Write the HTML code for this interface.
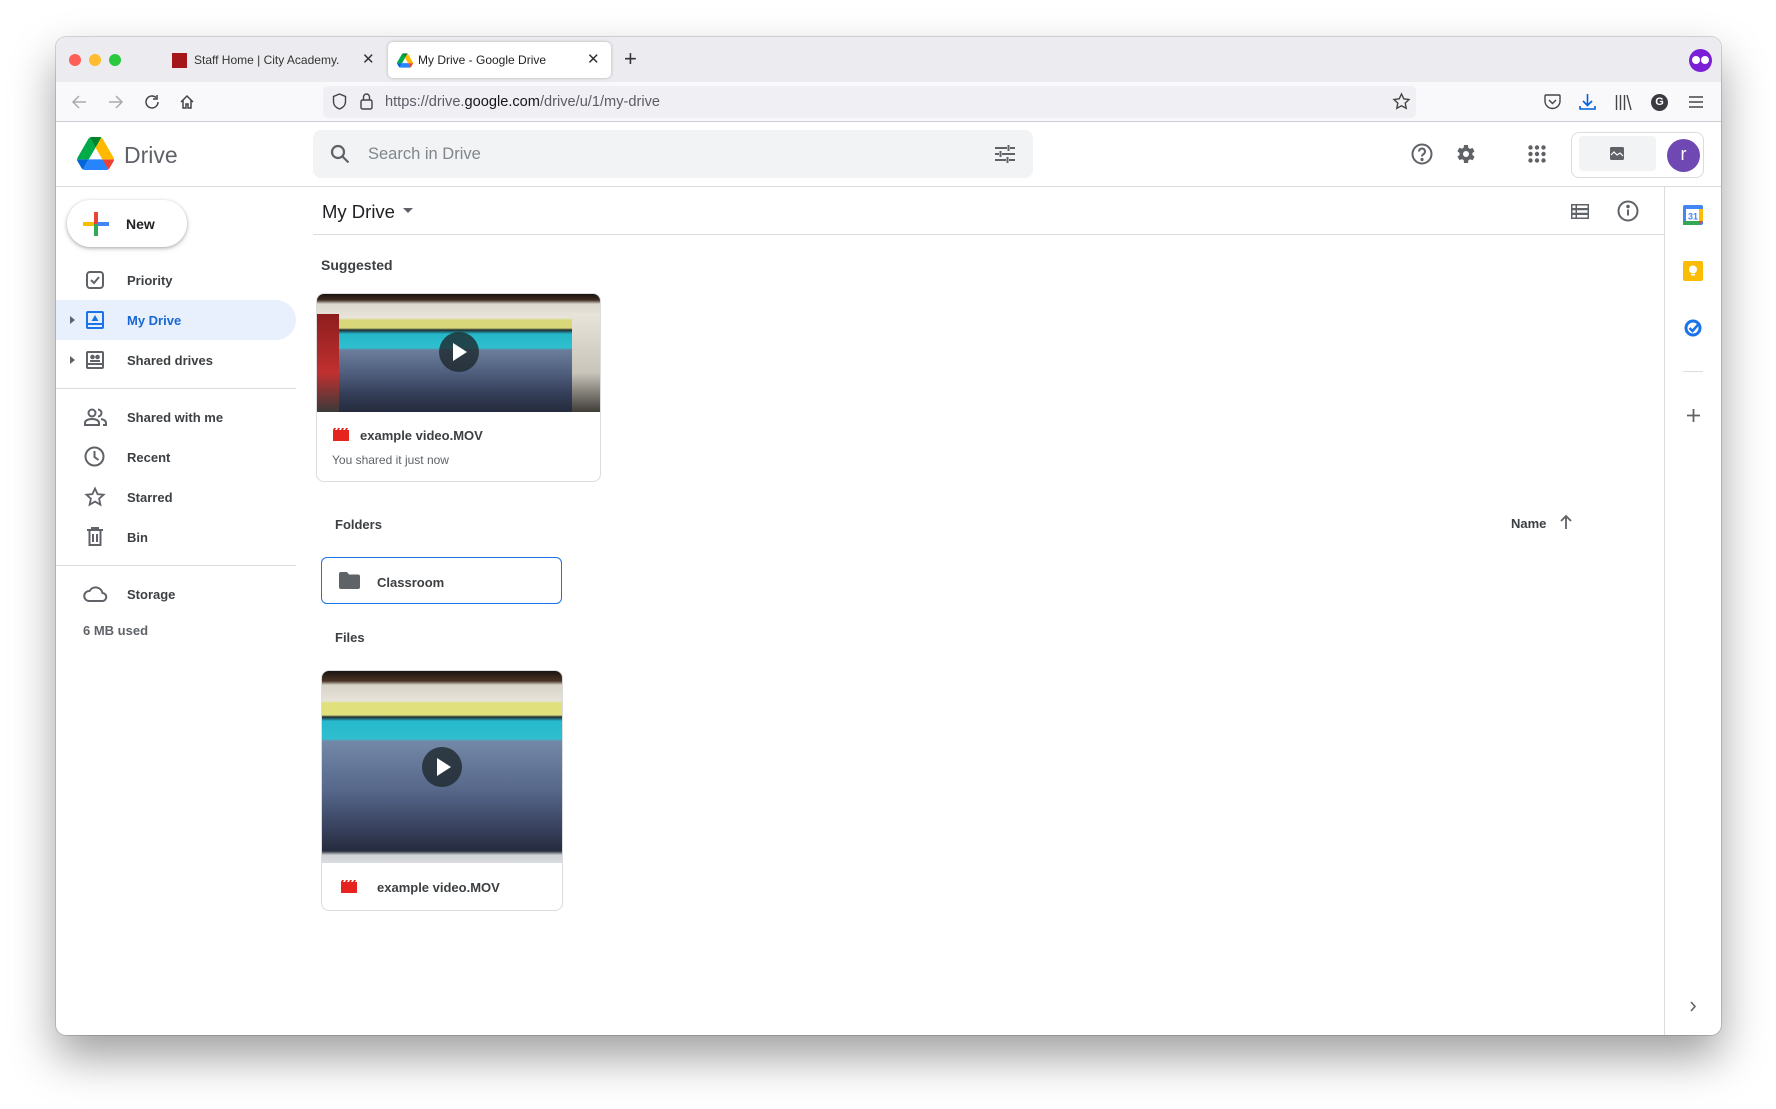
<!DOCTYPE html>
<html><head><meta charset="utf-8"><style>
*{box-sizing:border-box;margin:0;padding:0}
body{width:1776px;height:1109px;background:#fff;position:relative;overflow:hidden;font-family:"Liberation Sans",Arial,sans-serif;color:#3c4043}
.a{position:absolute}
.win{left:56px;top:37px;width:1665px;height:998px;border-radius:10px;background:#fff;box-shadow:0 22px 45px rgba(0,0,0,.38),0 0 0 1px rgba(0,0,0,.15);overflow:hidden}
.lbl{font-size:13px;font-weight:bold;color:#3c4043}
svg{position:absolute;overflow:visible}
</style></head><body>
<div class="a win"></div>
<div class="a" style="left:56px;top:37px;width:1665px;height:45px;background:#ececf0;border-radius:10px 10px 0 0"></div>
<div class="a" style="left:69px;top:54px;width:12px;height:12px;border-radius:50%;background:#fe5f57"></div>
<div class="a" style="left:89px;top:54px;width:12px;height:12px;border-radius:50%;background:#febc2e"></div>
<div class="a" style="left:109px;top:54px;width:12px;height:12px;border-radius:50%;background:#28c840"></div>
<div class="a" style="left:172px;top:53px;width:15px;height:15px;background:#a4161a"></div>
<div class="a" style="left:194px;top:53px;font-size:12px;color:#333">Staff Home | City Academy.</div>
<div class="a" style="left:362px;top:50px;font-size:15px;color:#333">✕</div>
<div class="a" style="left:388px;top:42px;width:223px;height:36px;background:#fff;border-radius:5px;box-shadow:0 0 3px rgba(0,0,0,.25)"></div>
<svg style="left:397px;top:53px" width="16" height="15" viewBox="0 0 87 78"><path d="M6.6 66.85l3.850 6.65c.8 1.4 1.95 2.5 3.3 3.3L27.5 53H0c0 1.55.4 3.1 1.2 4.5z" fill="#0066da"/><path d="M43.65 25L29.9 1.2c-1.35.8-2.5 1.9-3.3 3.3L1.2 48.5A9 9 0 000 53h27.5z" fill="#00ac47"/><path d="M73.55 76.8c1.35-.8 2.5-1.9 3.3-3.3l1.6-2.75 7.65-13.25c.8-1.4 1.2-2.95 1.2-4.5H59.8l5.85 11.5z" fill="#ea4335"/><path d="M43.65 25L57.4 1.2C56.05.4 54.5 0 52.9 0H34.4c-1.6 0-3.15.45-4.5 1.2z" fill="#00832d"/><path d="M59.8 53H27.5L13.75 76.8c1.35.8 2.9 1.2 4.5 1.2h50.8c1.6 0 3.15-.45 4.5-1.2z" fill="#2684fc"/><path d="M73.4 26.5L60.7 4.5c-.8-1.4-1.95-2.5-3.3-3.3L43.65 25 59.8 53h27.45c0-1.55-.4-3.1-1.2-4.5z" fill="#ffba00"/></svg>
<div class="a" style="left:418px;top:53px;font-size:12px;color:#222">My Drive - Google Drive</div>
<div class="a" style="left:587px;top:50px;font-size:15px;color:#333">✕</div>
<div class="a" style="left:624px;top:46px;font-size:22px;color:#333;font-weight:300">+</div>
<div class="a" style="left:1689px;top:49px;width:23px;height:23px;border-radius:50%;background:#7a1fd6"></div>
<div class="a" style="left:1692px;top:56px;width:8px;height:8px;border-radius:50%;background:#fff"></div>
<div class="a" style="left:1701px;top:56px;width:8px;height:8px;border-radius:50%;background:#fff"></div>
<div class="a" style="left:56px;top:82px;width:1665px;height:40px;background:#f9f9fb;border-bottom:1px solid #cfcfd8"></div>
<svg style="left:71px;top:94px" width="16" height="16" fill="none" stroke="#aaa" stroke-width="1.5"><path d="M15 8H2M8 2L2 8l6 6"/></svg>
<svg style="left:108px;top:94px" width="16" height="16" fill="none" stroke="#aaa" stroke-width="1.5"><path d="M1 8h13M8 2l6 6-6 6"/></svg>
<svg style="left:144px;top:94px" width="16" height="16" fill="none" stroke="#444" stroke-width="1.5"><path d="M14 8a6 6 0 1 1-2-4.5M13 1v4H9"/></svg>
<svg style="left:179px;top:94px" width="16" height="16" fill="none" stroke="#444" stroke-width="1.5"><path d="M2 8L8 2l6 6M4 6v8h3v-4h2v4h3V6"/></svg>
<div class="a" style="left:323px;top:86px;width:1093px;height:32px;background:#f0f0f4;border-radius:5px"></div>
<svg style="left:332px;top:93px" width="15" height="17" fill="none" stroke="#444" stroke-width="1.4"><path d="M7.5 1L1.5 3.5v5c0 4 3 6.5 6 7.5 3-1 6-3.5 6-7.5v-5z"/></svg>
<svg style="left:360px;top:92px" width="13" height="18" fill="none" stroke="#444" stroke-width="1.4"><rect x="1" y="8" width="11" height="9" rx="1.5"/><path d="M3.5 8V5a3 3 0 0 1 6 0v3"/></svg>
<div class="a" style="left:385px;top:94px;font-size:14.6px;color:#5b5b66">https://drive.<span style="color:#15141a">google.com</span>/drive/u/1/my-drive</div>
<svg style="left:1393px;top:93px" width="17" height="17" fill="none" stroke="#444" stroke-width="1.4"><path d="M8.5 1l2.3 4.8 5.2.7-3.8 3.6 1 5.2-4.7-2.5-4.7 2.5 1-5.2L1 6.5l5.2-.7z"/></svg>
<svg style="left:1544px;top:94px" width="17" height="16" fill="none" stroke="#444" stroke-width="1.4"><path d="M2 1h13a1 1 0 0 1 1 1v5a7.5 7.5 0 0 1-15 0V2a1 1 0 0 1 1-1zM5 6l3.5 3.5L12 6"/></svg>
<svg style="left:1579px;top:93px" width="17" height="17" fill="none" stroke="#0061e0" stroke-width="1.6"><path d="M8.5 1v11M4 8l4.5 4.5L13 8M1 13v3h15v-3"/></svg>
<svg style="left:1615px;top:94px" width="17" height="16" fill="none" stroke="#444" stroke-width="1.4"><path d="M1.5 1v15M5.5 1v15M9.5 1v15M12 1l4 15"/></svg>
<div class="a" style="left:1651px;top:94px;width:17px;height:17px;border-radius:50%;background:#3a3a40;color:#fff;font-size:11px;font-weight:bold;text-align:center;line-height:17px">G</div>
<svg style="left:1688px;top:95px" width="16" height="14" fill="none" stroke="#444" stroke-width="1.4"><path d="M1 2h14M1 7h14M1 12h14"/></svg>
<div class="a" style="left:56px;top:186px;width:1665px;height:1px;background:#dadce0"></div>
<svg style="left:77px;top:137px" width="37" height="33" viewBox="0 0 87 78"><path d="M6.6 66.85l3.85 6.65c.8 1.4 1.95 2.5 3.3 3.3L27.5 53H0c0 1.55.4 3.1 1.2 4.5z" fill="#0066da"/><path d="M43.65 25L29.9 1.2c-1.35.8-2.5 1.9-3.3 3.3L1.2 48.5A9 9 0 000 53h27.5z" fill="#00ac47"/><path d="M73.55 76.8c1.35-.8 2.5-1.9 3.3-3.3l1.6-2.75 7.65-13.25c.8-1.4 1.2-2.95 1.2-4.5H59.8l5.85 11.5z" fill="#ea4335"/><path d="M43.65 25L57.4 1.2C56.05.4 54.5 0 52.9 0H34.4c-1.6 0-3.15.45-4.5 1.2z" fill="#00832d"/><path d="M59.8 53H27.5L13.75 76.8c1.35.8 2.9 1.2 4.5 1.2h50.8c1.6 0 3.15-.45 4.5-1.2z" fill="#2684fc"/><path d="M73.4 26.5L60.7 4.5c-.8-1.4-1.95-2.5-3.3-3.3L43.65 25 59.8 53h27.45c0-1.55-.4-3.1-1.2-4.5z" fill="#ffba00"/></svg>
<div class="a" style="left:124px;top:142px;font-size:23px;color:#5f6368">Drive</div>
<div class="a" style="left:313px;top:130px;width:720px;height:48px;background:#f1f3f4;border-radius:8px"></div>
<svg style="left:330px;top:144px" width="20" height="20" fill="none" stroke="#5f6368" stroke-width="2.2"><circle cx="8" cy="8" r="6"/><path d="M12.5 12.5l6 6"/></svg>
<div class="a" style="left:368px;top:145px;font-size:16.5px;color:#80868b">Search in Drive</div>
<svg style="left:995px;top:145px" width="20" height="18" fill="none" stroke="#5f6368" stroke-width="2"><path d="M0 3h12M15 3h5M13.5 0v6M0 9h4M7 9h13M5.5 6v6M0 15h11M14 15h6M12.5 12v6"/></svg>
<svg style="left:1411px;top:143px" width="22" height="22" fill="none" stroke="#5f6368" stroke-width="2"><circle cx="11" cy="11" r="9.5"/><path d="M8 8.5a3 3 0 1 1 4.5 2.6c-1 .6-1.5 1.2-1.5 2.4"/><circle cx="11" cy="16.5" r=".6" fill="#5f6368"/></svg>
<svg style="left:1454px;top:142px" width="24" height="24" viewBox="0 0 24 24"><path fill="#5f6368" d="M19.4 13a7.5 7.5 0 0 0 0-2l2.1-1.6-2-3.5-2.5 1a7 7 0 0 0-1.7-1L15 3h-4l-.4 2.7a7 7 0 0 0-1.7 1l-2.5-1-2 3.5L6.6 11a7.5 7.5 0 0 0 0 2l-2.1 1.6 2 3.5 2.5-1a7 7 0 0 0 1.7 1L11 21h4l.4-2.7a7 7 0 0 0 1.7-1l2.5 1 2-3.5z" transform="translate(-1 0)"/><circle cx="12" cy="12" r="3" fill="#fff"/></svg>
<svg style="left:1528px;top:145px" width="18" height="18" fill="#5f6368"><circle cx="2.5" cy="2.5" r="2.2"/><circle cx="9" cy="2.5" r="2.2"/><circle cx="15.5" cy="2.5" r="2.2"/><circle cx="2.5" cy="9" r="2.2"/><circle cx="9" cy="9" r="2.2"/><circle cx="15.5" cy="9" r="2.2"/><circle cx="2.5" cy="15.5" r="2.2"/><circle cx="9" cy="15.5" r="2.2"/><circle cx="15.5" cy="15.5" r="2.2"/></svg>
<div class="a" style="left:1571px;top:132px;width:133px;height:46px;border:1px solid #dadce0;border-radius:8px"></div>
<div class="a" style="left:1579px;top:136px;width:77px;height:35px;background:#f1f3f4;border-radius:4px"></div>
<svg style="left:1610px;top:147px" width="14" height="13"><rect width="14" height="13" rx="1.5" fill="#5f6368"/><path d="M1 8l3-3 3 3 3-2 3 3" fill="none" stroke="#fff" stroke-width="1.2"/></svg>
<div class="a" style="left:1667px;top:139px;width:33px;height:33px;border-radius:50%;background:#6f48b3;color:#fff;font-size:18px;text-align:center;line-height:31px">r</div>
<div class="a" style="left:67px;top:200px;width:120px;height:47px;border-radius:24px;background:#fff;box-shadow:0 1px 3px rgba(60,64,67,.35),0 2px 6px rgba(60,64,67,.15)"></div>
<div class="a" style="left:94px;top:212px;width:4px;height:12px;background:#ea4335"></div>
<div class="a" style="left:94px;top:224px;width:4px;height:12px;background:#34a853"></div>
<div class="a" style="left:83px;top:222px;width:11px;height:4px;background:#fbbc04"></div>
<div class="a" style="left:98px;top:222px;width:11px;height:4px;background:#4285f4"></div>
<div class="a lbl" style="left:126px;top:216px;font-size:14px;color:#202124">New</div>
<div class="a" style="left:56px;top:300px;width:240px;height:40px;background:#e8f0fe;border-radius:0 20px 20px 0"></div>
<svg style="left:86px;top:271px" width="18" height="18" fill="none" stroke="#5f6368" stroke-width="2"><rect x="1" y="1" width="16" height="16" rx="3"/><path d="M5 9l3 3 5-6"/></svg>
<div class="a lbl" style="left:127px;top:273px">Priority</div>
<svg style="left:70px;top:316px" width="6" height="8"><path d="M0 0l5 4-5 4z" fill="#5f6368"/></svg>
<svg style="left:86px;top:311px" width="18" height="18" fill="none" stroke="#1a73e8" stroke-width="2"><rect x="1" y="1" width="16" height="16" rx="1"/><path d="M1 13h16"/><path d="M9 4l3.5 6h-7z" fill="#1a73e8" stroke="none"/></svg>
<div class="a lbl" style="left:127px;top:313px;color:#1967d2">My Drive</div>
<svg style="left:70px;top:356px" width="6" height="8"><path d="M0 0l5 4-5 4z" fill="#5f6368"/></svg>
<svg style="left:86px;top:351px" width="18" height="18" fill="none" stroke="#5f6368" stroke-width="2"><rect x="1" y="1" width="16" height="16" rx="1"/><path d="M1 13h16"/><circle cx="6.5" cy="6" r="1.3" fill="#5f6368"/><circle cx="11.5" cy="6" r="1.3" fill="#5f6368"/><path d="M4 10h5M9 10h5" stroke-width="2"/></svg>
<div class="a lbl" style="left:127px;top:353px">Shared drives</div>
<div class="a" style="left:56px;top:388px;width:240px;height:1px;background:#dadce0"></div>
<svg style="left:84px;top:408px" width="24" height="18" fill="none" stroke="#5f6368" stroke-width="2"><circle cx="8" cy="5" r="3.5"/><path d="M1 17v-2c0-2.5 3-4 7-4s7 1.5 7 4v2zM14 1.5a3.5 3.5 0 0 1 0 7M17 11c2.5.5 5 1.8 5 4v2h-3"/></svg>
<div class="a lbl" style="left:127px;top:410px">Shared with me</div>
<svg style="left:84px;top:446px" width="21" height="21" fill="none" stroke="#5f6368" stroke-width="2"><circle cx="10.5" cy="10.5" r="9"/><path d="M10.5 5v6l4 3"/></svg>
<div class="a lbl" style="left:127px;top:450px">Recent</div>
<svg style="left:85px;top:487px" width="20" height="20" fill="none" stroke="#5f6368" stroke-width="1.8"><path d="M10 1.5l2.6 5.6 6 .6-4.5 4 1.3 6-5.4-3.1-5.4 3.1 1.3-6L1.4 7.7l6-.6z"/></svg>
<div class="a lbl" style="left:127px;top:490px">Starred</div>
<svg style="left:87px;top:527px" width="16" height="19" fill="none" stroke="#5f6368" stroke-width="2"><path d="M0 3h16M5 3V1h6v2M2.5 3v15h11V3M6 7v8M10 7v8"/></svg>
<div class="a lbl" style="left:127px;top:530px">Bin</div>
<div class="a" style="left:56px;top:565px;width:240px;height:1px;background:#dadce0"></div>
<svg style="left:83px;top:585px" width="24" height="17" fill="none" stroke="#5f6368" stroke-width="2"><path d="M6 16h13a4 4 0 0 0 .5-8A7 7 0 0 0 6.5 6 5 5 0 0 0 6 16z"/></svg>
<div class="a lbl" style="left:127px;top:587px">Storage</div>
<div class="a" style="left:83px;top:623px;font-size:13px;color:#5f6368;font-weight:bold">6 MB used</div>
<div class="a" style="left:322px;top:201px;font-size:18.5px;color:#202124">My Drive</div>
<svg style="left:403px;top:208px" width="10" height="5"><path d="M0 0h10L5 5z" fill="#5f6368"/></svg>
<div class="a" style="left:313px;top:234px;width:1351px;height:1px;background:#dadce0"></div>
<svg style="left:1571px;top:204px" width="18" height="15" fill="#5f6368"><rect width="18" height="15"/><path d="M1.5 1.5h3v2.5h-3zM6 1.5h10.5v2.5H6zM1.5 6.3h3v2.5h-3zM6 6.3h10.5v2.5H6zM1.5 11h3v2.5h-3zM6 11h10.5v2.5H6z" fill="#fff"/></svg>
<svg style="left:1617px;top:200px" width="22" height="22" fill="none" stroke="#5f6368" stroke-width="2"><circle cx="11" cy="11" r="9.5"/><path d="M11 9.5v6"/><circle cx="11" cy="6.5" r=".8" fill="#5f6368"/></svg>
<div class="a" style="left:1664px;top:187px;width:1px;height:848px;background:#dadce0"></div>
<svg style="left:1683px;top:205px" width="20" height="20"><rect width="20" height="20" rx="2" fill="#4285f4"/><rect x="3" y="4" width="14" height="12" fill="#fff"/><rect x="0" y="16" width="16" height="4" fill="#34a853"/><rect x="16" y="4" width="4" height="12" fill="#fbbc04"/><path d="M16 16h4l-4 4z" fill="#ea4335"/><text x="10" y="14.5" font-size="9" font-family="Liberation Sans" font-weight="bold" fill="#4285f4" text-anchor="middle">31</text></svg>
<svg style="left:1683px;top:261px" width="20" height="20"><rect width="20" height="20" rx="2" fill="#fbbc04"/><circle cx="10" cy="8.5" r="4" fill="#fff"/><rect x="8" y="13" width="4" height="1.5" fill="#fff"/></svg>
<svg style="left:1684px;top:318px" width="19" height="19"><circle cx="9" cy="10" r="7" fill="none" stroke="#1a73e8" stroke-width="3"/><path d="M5.5 10l3 3 7-8" fill="none" stroke="#1a73e8" stroke-width="2.5"/></svg>
<div class="a" style="left:1683px;top:371px;width:20px;height:1px;background:#dadce0"></div>
<svg style="left:1687px;top:409px" width="13" height="13" stroke="#5f6368" stroke-width="1.8"><path d="M6.5 0v13M0 6.5h13"/></svg>
<svg style="left:1690px;top:1001px" width="6" height="11" fill="none" stroke="#5f6368" stroke-width="1.6"><path d="M1 1l4 4.5L1 10"/></svg>
<div class="a lbl" style="left:321px;top:257px;font-size:14px">Suggested</div>
<div class="a" style="left:316px;top:293px;width:285px;height:189px;border:1px solid #dadce0;border-radius:8px;overflow:hidden">
 <div class="a" style="left:0;top:0;width:285px;height:118px;background:linear-gradient(180deg,#1a1410 0,#3d2c22 6px,#ddd9cf 10px,#e8e4da 24px,#d8d87a 26px,#d8d87a 34px,#1e2a30 36px,#25b7c9 40px,#2fbfcf 54px,#6c7e9c 56px,#4e5d7c 80px,#343e58 100px,#262c3e 118px)"></div>
 <div class="a" style="left:0;top:20px;width:22px;height:98px;background:linear-gradient(#8d1d1d,#c03030 60%,#3a3a3a)"></div>
 <div class="a" style="left:255px;top:20px;width:30px;height:98px;background:linear-gradient(#e8e4da,#c8c4ba 60%,#403c38)"></div>
 <div class="a" style="left:122px;top:38px;width:40px;height:40px;border-radius:50%;background:rgba(30,40,45,.8)"></div>
 <svg style="left:136px;top:49px" width="14" height="18"><path d="M0 0l14 9-14 9z" fill="#fff"/></svg>
</div>
<svg style="left:333px;top:428px" width="16" height="13"><rect y="2" width="16" height="11" fill="#e52420"/><path d="M1 0h2l-1 2H0zM5 0h2l-1 2H4zM9 0h2l-1 2H8zM13 0h2l-1 2h-2z" fill="#e52420"/></svg>
<div class="a lbl" style="left:360px;top:428px">example video.MOV</div>
<div class="a" style="left:332px;top:453px;font-size:12px;color:#5f6368">You shared it just now</div>
<div class="a lbl" style="left:335px;top:517px">Folders</div>
<div class="a lbl" style="left:1511px;top:516px">Name</div>
<svg style="left:1560px;top:515px" width="12" height="14" fill="none" stroke="#5f6368" stroke-width="1.8"><path d="M6 14V1M1 6l5-5 5 5"/></svg>
<div class="a" style="left:321px;top:557px;width:241px;height:47px;border:1.5px solid #1a73e8;border-radius:6px"></div>
<svg style="left:339px;top:572px" width="21" height="17"><path d="M2 0h6l2 2.5h9a2 2 0 0 1 2 2V15a2 2 0 0 1-2 2H2a2 2 0 0 1-2-2V2a2 2 0 0 1 2-2z" fill="#5f6368"/></svg>
<div class="a lbl" style="left:377px;top:575px">Classroom</div>
<div class="a lbl" style="left:335px;top:630px">Files</div>
<div class="a" style="left:321px;top:670px;width:242px;height:241px;border:1px solid #dadce0;border-radius:8px;overflow:hidden">
 <div class="a" style="left:0;top:0;width:242px;height:192px;background:linear-gradient(180deg,#1a1410 0,#4a3426 10px,#d8d4ca 14px,#e6e2d8 30px,#e0e07c 32px,#e0e07c 44px,#1e2a30 46px,#26b8cc 50px,#2fbfd0 68px,#7488a8 70px,#56678a 120px,#363f5a 160px,#262c3e 180px,#cfd3d6 184px,#dadcdf 192px)"></div>
 <div class="a" style="left:100px;top:76px;width:40px;height:40px;border-radius:50%;background:rgba(30,40,45,.8)"></div>
 <svg style="left:115px;top:87px" width="14" height="18"><path d="M0 0l14 9-14 9z" fill="#fff"/></svg>
</div>
<svg style="left:341px;top:880px" width="16" height="13"><rect y="2" width="16" height="11" fill="#e52420"/><path d="M1 0h2l-1 2H0zM5 0h2l-1 2H4zM9 0h2l-1 2H8zM13 0h2l-1 2h-2z" fill="#e52420"/></svg>
<div class="a lbl" style="left:377px;top:880px">example video.MOV</div>
</body></html>
